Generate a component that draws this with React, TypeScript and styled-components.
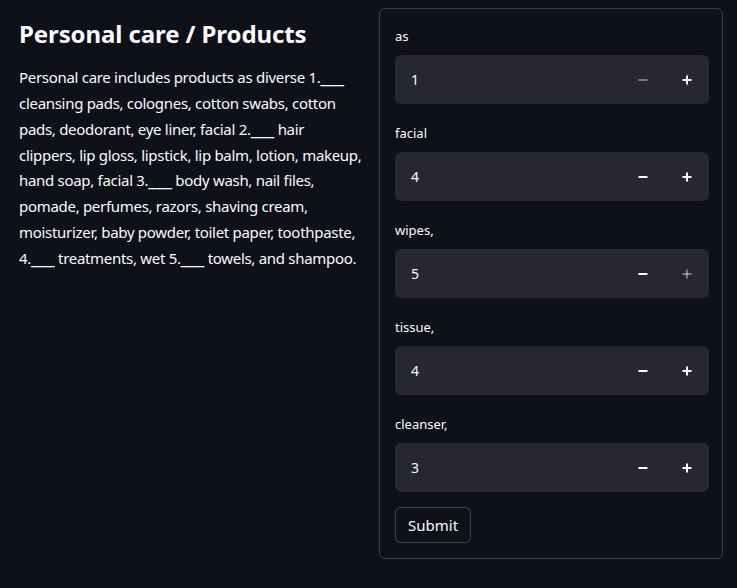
import React from "react";
import styled, { createGlobalStyle } from "styled-components";

const Global = createGlobalStyle`
  html, body { margin: 0; padding: 0; background: #0e1117; }
  body { font-family: "Noto Sans", "Open Sans", sans-serif; color: #fafafa; }
`;

const Page = styled.div`
  width: 737px;
  height: 588px;
  box-sizing: border-box;
  padding: 8px 14px 0 19px;
  display: flex;
  gap: 16px;
  background: #0e1117;
`;

const LeftCol = styled.div`
  width: 344px;
  flex: none;
`;

const Title = styled.h2`
  margin: 0;
  padding: 8px 0 0;
  font-size: 24px;
  line-height: 36px;
  font-weight: 700;
  color: #fafafa;
  letter-spacing: -0.1px;
`;

const Para = styled.p`
  margin: 13px 0 0;
  width: 344px;
  font-size: 15px;
  line-height: 25.86px;
  color: #fafafa;
  letter-spacing: -0.3px;
`;

const Blank = styled.span`
  font-size: 18px;
  line-height: 20px;
  letter-spacing: -0.2px;
`;

const Form = styled.form`
  width: 344px;
  height: 551px;
  flex: none;
  box-sizing: border-box;
  border: 1px solid rgba(250, 250, 250, 0.2);
  border-radius: 6px;
  padding: 18px 13px 15px 15px;
  display: flex;
  flex-direction: column;
`;

const Field = styled.div`
  display: flex;
  flex-direction: column;
  margin-bottom: 20px;
`;

const Label = styled.label`
  font-size: 13px;
  line-height: 18px;
  margin-bottom: 10px;
  color: #fafafa;
`;

const InputBox = styled.div`
  display: flex;
  height: 49px;
  background: #262730;
  border-radius: 6px;
  overflow: hidden;
`;

const NumberText = styled.div`
  flex: 1;
  display: flex;
  align-items: center;
  padding-left: 16px;
  font-size: 14px;
  color: #fafafa;
`;

const StepButton = styled.button<{ $disabled?: boolean }>`
  width: 44px;
  border: none;
  background: transparent;
  padding: 0;
  display: flex;
  align-items: center;
  justify-content: center;
  color: ${(p) => (p.$disabled ? "rgba(250,250,250,0.4)" : "#fafafa")};
  cursor: pointer;
`;

const SubmitButton = styled.button`
  align-self: flex-start;
  margin-top: -5px;
  height: 36px;
  padding: 0 12px;
  background: #0e1117;
  border: 1px solid rgba(250, 250, 250, 0.2);
  border-radius: 6px;
  color: #fafafa;
  font-family: "Noto Sans", sans-serif;
  font-size: 15px;
`;

const Minus = () => (
  <svg width="10" height="10" viewBox="0 0 10 10">
    <rect x="0.5" y="4" width="9" height="2" fill="currentColor" />
  </svg>
);

const Plus = () => (
  <svg width="10" height="10" viewBox="0 0 10 10">
    <rect x="0.5" y="4" width="9" height="2" fill="currentColor" />
    <rect x="4" y="0.5" width="2" height="9" fill="currentColor" />
  </svg>
);

const fields = [
  { label: "as", value: 1 },
  { label: "facial", value: 4 },
  { label: "wipes,", value: 5 },
  { label: "tissue,", value: 4 },
  { label: "cleanser,", value: 3 },
];

export default function App() {
  return (
    <>
      <Global />
      <Page>
        <LeftCol>
          <Title>Personal care / Products</Title>
          <Para>
            Personal care includes products as diverse 1.<Blank>___</Blank> cleansing pads, colognes, cotton swabs,
            cotton pads, deodorant, eye liner, facial 2.<Blank>___</Blank> hair clippers, lip gloss, lipstick, lip
            balm, lotion, makeup, hand soap, facial 3.<Blank>___</Blank> body wash, nail files, pomade, perfumes,
            razors, shaving cream, moisturizer, baby powder, toilet paper, toothpaste, 4.<Blank>___</Blank>{" "}
            treatments, wet 5.<Blank>___</Blank> towels, and shampoo.
          </Para>
        </LeftCol>
        <Form onSubmit={(e) => e.preventDefault()}>
          {fields.map((f) => (
            <Field key={f.label}>
              <Label>{f.label}</Label>
              <InputBox>
                <NumberText>{f.value}</NumberText>
                <StepButton type="button" $disabled={f.value <= 1}>
                  <Minus />
                </StepButton>
                <StepButton type="button" $disabled={f.value >= 5}>
                  <Plus />
                </StepButton>
              </InputBox>
            </Field>
          ))}
          <SubmitButton type="submit">Submit</SubmitButton>
        </Form>
      </Page>
    </>
  );
}
